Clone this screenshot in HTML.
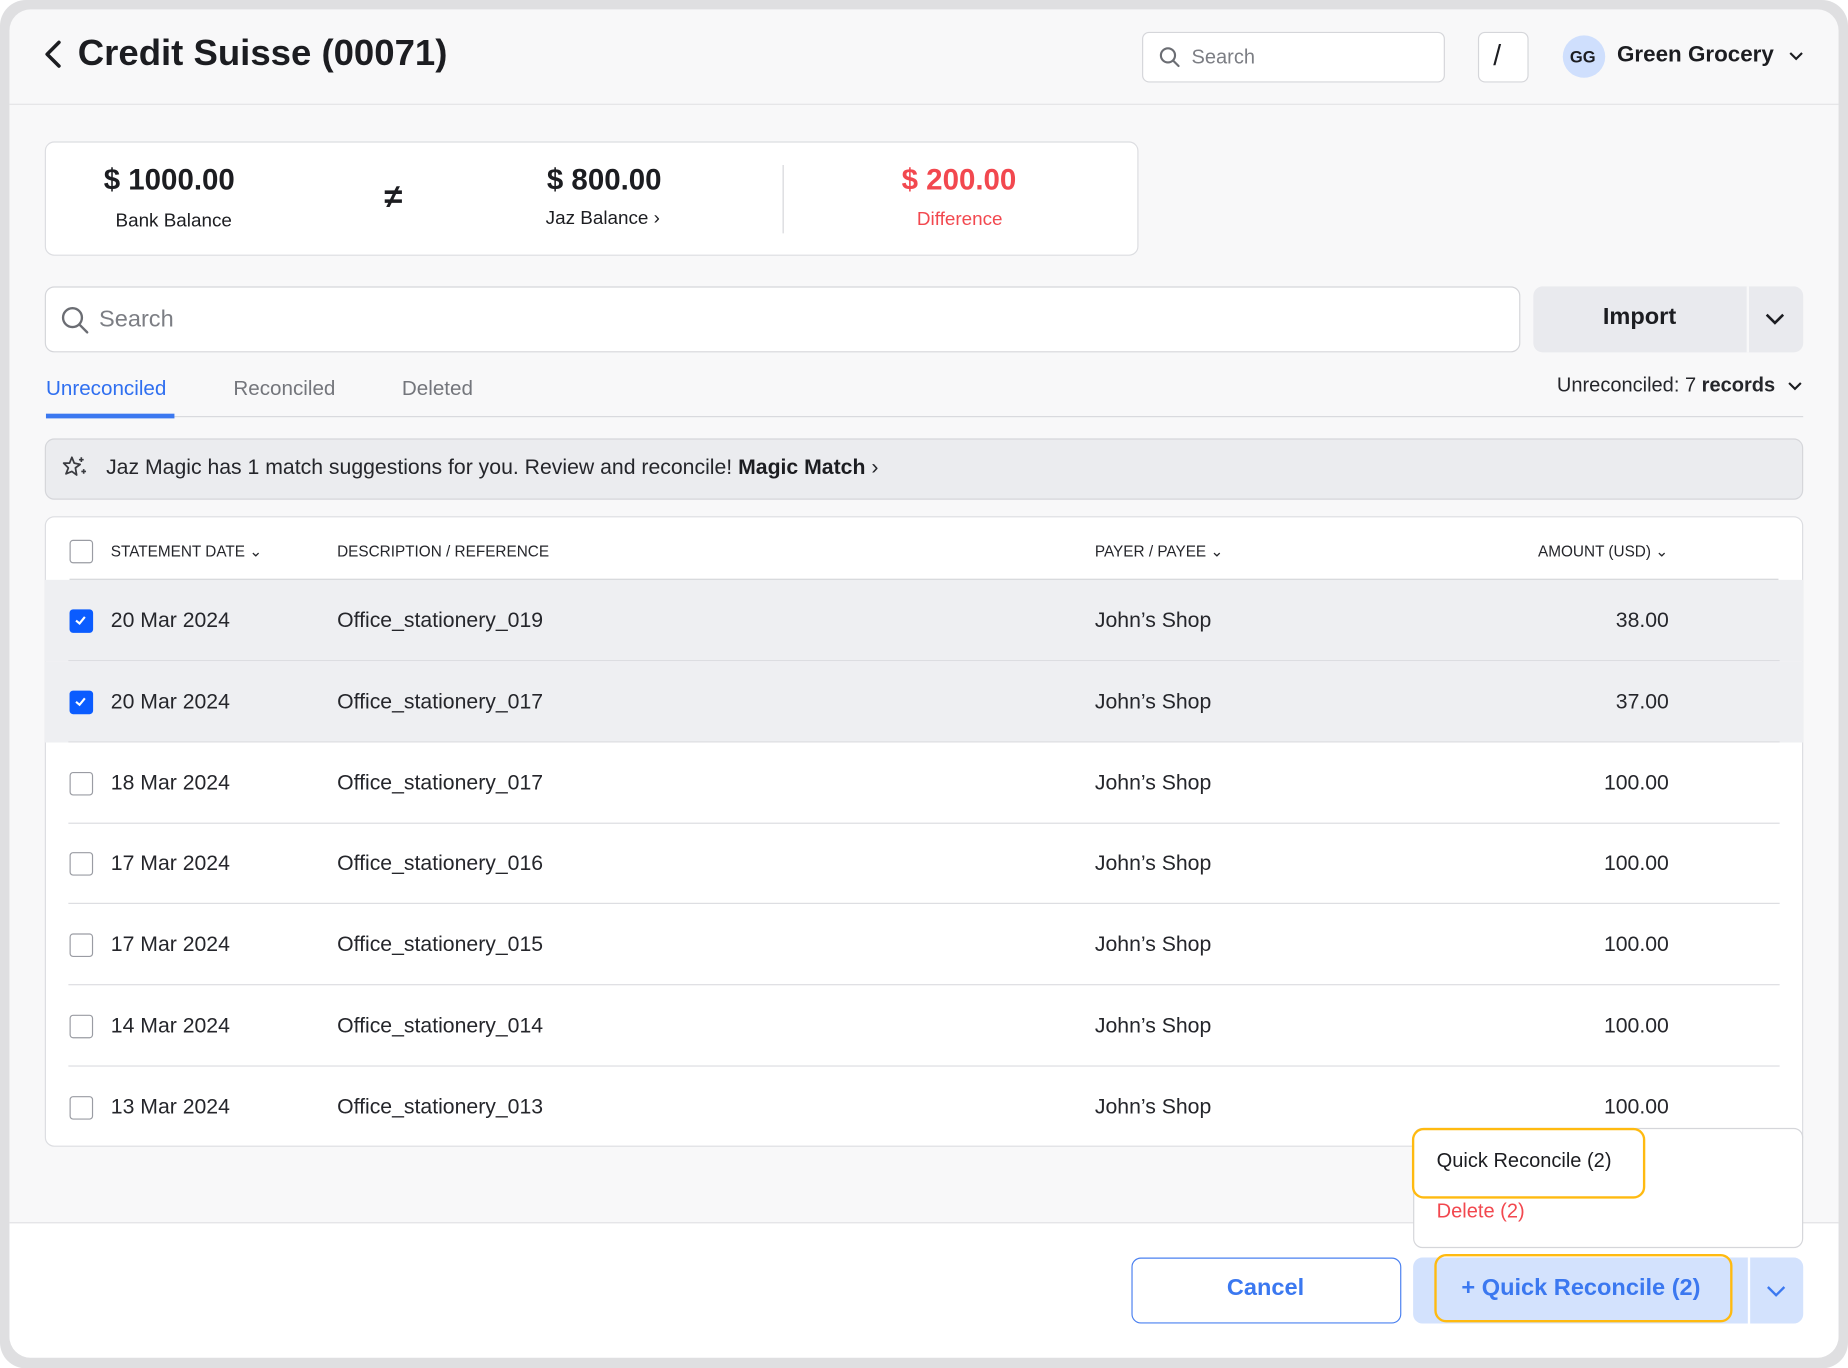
<!DOCTYPE html>
<html><head><meta charset="utf-8"><style>
*{box-sizing:border-box;margin:0;padding:0}
html,body{width:1848px;height:1368px;overflow:hidden;background:#fff;font-family:"Liberation Sans",sans-serif;color:#1c1d21}
#s{position:absolute;left:0;top:0;width:1568px;height:1161px;transform:scale(1.178571);transform-origin:0 0;background:#dfdfe1;border-radius:22px}
.a{position:absolute}
#in{left:8px;top:8px;width:1552px;height:1144px;background:#f8f8f9;border-radius:18px;overflow:hidden}
.t{position:absolute;white-space:nowrap}
.row{position:absolute;left:38px;width:1492px;height:69px}
.row .ln{position:absolute;left:20px;right:20px;bottom:0;height:1px;background:#dcdde1}
.cb{position:absolute;left:21px;width:20px;height:20px;border:1.5px solid #9a9ca3;border-radius:3px;background:#fff}
.cb.on{background:#0b5cff;border-color:#0b5cff}
.rt{position:absolute;font-size:18px;color:#25262b;top:24px}
</style></head><body><div id="s">
<div id="in" class="a">
 <div class="a" style="left:0;top:80px;width:1552px;height:1px;background:#e3e3e6"></div>
 <svg class="a" style="left:28px;top:24px" width="20" height="30" viewBox="0 0 20 30"><path d="M14 4 L4 14 L14 24" fill="none" stroke="#1c1d21" stroke-width="3" stroke-linecap="round" stroke-linejoin="round"/></svg>
 <div class="t" style="left:58px;top:19px;font-size:31px;font-weight:bold">Credit Suisse (00071)</div>
 <div class="a" style="left:961px;top:19px;width:257px;height:43px;background:#fff;border:1px solid #d5d6da;border-radius:6px"></div>
 <svg class="a" style="left:975px;top:31px" width="20" height="20" viewBox="0 0 20 20"><circle cx="8" cy="8" r="6" fill="none" stroke="#6b6d73" stroke-width="1.8"/><path d="M12.5 12.5 L17 17" stroke="#6b6d73" stroke-width="1.8" stroke-linecap="round"/></svg>
 <div class="t" style="left:1003px;top:31px;font-size:17px;color:#7c7e84">Search</div>
 <div class="a" style="left:1246px;top:19px;width:43px;height:43px;background:#fff;border:1px solid #d5d6da;border-radius:6px"></div>
 <div class="t" style="left:1259px;top:26px;font-size:24px;color:#1c1d21">/</div>
 <div class="a" style="left:1318px;top:22px;width:36px;height:36px;border-radius:50%;background:#cfdffd"></div>
 <div class="t" style="left:1324px;top:32px;font-size:14px;font-weight:bold;color:#1c1d21">GG</div>
 <div class="t" style="left:1364px;top:28px;font-size:19px;font-weight:bold">Green Grocery</div>
 <svg class="a" style="left:1509px;top:35px" width="14" height="10" viewBox="0 0 14 10"><path d="M2 2 L7 7 L12 2" fill="none" stroke="#1c1d21" stroke-width="1.8"/></svg>

 <div class="a" style="left:30px;top:112px;width:928px;height:97px;background:#fff;border:1.5px solid #dcdde1;border-radius:8px"></div>
 <div class="t" style="left:80px;top:131px;font-size:25px;font-weight:bold">$ 1000.00</div>
 <div class="t" style="left:90px;top:171px;font-size:16px">Bank Balance</div>
 <div class="t" style="left:318px;top:143px;font-size:28px;font-weight:bold">≠</div>
 <div class="t" style="left:456px;top:131px;font-size:25px;font-weight:bold">$ 800.00</div>
 <div class="t" style="left:455px;top:169px;font-size:16px">Jaz Balance ›</div>
 <div class="a" style="left:656px;top:132px;width:1px;height:58px;background:#d5d6da"></div>
 <div class="t" style="left:757px;top:131px;font-size:25px;font-weight:bold;color:#f2484f">$ 200.00</div>
 <div class="t" style="left:770px;top:170px;font-size:16px;color:#f2484f">Difference</div>

 <div class="a" style="left:30px;top:235px;width:1252px;height:56px;background:#fff;border:1.5px solid #d5d6da;border-radius:8px"></div>
 <svg class="a" style="left:43px;top:251px" width="26" height="26" viewBox="0 0 26 26"><circle cx="10.5" cy="10.5" r="8" fill="none" stroke="#6b6d73" stroke-width="2"/><path d="M16.5 16.5 L23 23" stroke="#6b6d73" stroke-width="2" stroke-linecap="round"/></svg>
 <div class="t" style="left:76px;top:252px;font-size:20px;color:#7c7e84">Search</div>
 <div class="a" style="left:1293px;top:235px;width:229px;height:56px;background:#e9eaee;border-radius:8px"></div>
 <div class="a" style="left:1474px;top:235px;width:2px;height:56px;background:#f8f8f9"></div>
 <div class="t" style="left:1352px;top:250px;font-size:20px;font-weight:bold">Import</div>
 <svg class="a" style="left:1489px;top:257px" width="18" height="12" viewBox="0 0 18 12"><path d="M2 2 L9 9 L16 2" fill="none" stroke="#1c1d21" stroke-width="2.2"/></svg>

 <div class="t" style="left:31px;top:311px;font-size:17.5px;color:#2f6ff0">Unreconciled</div>
 <div class="t" style="left:190px;top:311px;font-size:17.5px;color:#74767c">Reconciled</div>
 <div class="t" style="left:333px;top:311px;font-size:17.5px;color:#74767c">Deleted</div>
 <div class="a" style="left:31px;top:345px;width:1491px;height:1px;background:#d8d9dd"></div>
 <div class="a" style="left:31px;top:343px;width:109px;height:4px;background:#3b78f0"></div>
 <div class="t" style="left:1313px;top:309px;font-size:17px;color:#25262b">Unreconciled: 7 <b>records</b></div>
 <svg class="a" style="left:1508px;top:315px" width="14" height="10" viewBox="0 0 14 10"><path d="M2 2 L7 7 L12 2" fill="none" stroke="#1c1d21" stroke-width="1.8"/></svg>

 <div class="a" style="left:30px;top:364px;width:1492px;height:52px;background:#ebecef;border:1.5px solid #d5d6da;border-radius:8px"></div>
 <svg class="a" style="left:44px;top:377px" width="24" height="24" viewBox="0 0 24 24"><path d="M9 3 L11 8 L16 9 L12 12 L13 18 L9 15 L4 17 L6 12 L2 8 L7 8 Z" fill="none" stroke="#3a3b40" stroke-width="1.5" stroke-linejoin="round"/><path d="M17 3 v4 M15 5 h4 M19 13 v4 M17 15 h4" stroke="#3a3b40" stroke-width="1.4"/></svg>
 <div class="t" style="left:82px;top:378px;font-size:18px;color:#25262b">Jaz Magic has 1 match suggestions for you. Review and reconcile! <b style="color:#1c1d21">Magic Match</b> ›</div>

 <div class="a" style="left:30px;top:430px;width:1492px;height:535px;background:#fff;border:1.5px solid #dcdde1;border-radius:8px;overflow:hidden">
  <div class="cb" style="top:19px;left:20px"></div>
  <div class="t" style="left:55px;top:21px;font-size:13px;color:#25262b">STATEMENT DATE ⌄</div>
  <div class="t" style="left:247px;top:21px;font-size:13px;color:#25262b">DESCRIPTION / REFERENCE</div>
  <div class="t" style="left:890px;top:21px;font-size:13px;color:#25262b">PAYER / PAYEE ⌄</div>
  <div class="t" style="left:1266px;top:21px;font-size:13px;color:#25262b">AMOUNT (USD) ⌄</div>
  <div class="a" style="left:20px;right:20px;top:52px;height:1.5px;background:#d5d6da"></div>
 </div>
 <div id="rows"></div>

 <div class="a" style="left:0;top:1029px;width:1552px;height:115px;background:#fff;border-top:1px solid #e0e0e3"></div>
 <div class="a" style="left:952px;top:1059px;width:229px;height:56px;border:1.5px solid #4a80f0;border-radius:8px;background:#fff"></div>
 <div class="t" style="left:1033px;top:1074px;font-size:20px;font-weight:bold;color:#3b78f0">Cancel</div>
 <div class="a" style="left:1191px;top:1059px;width:331px;height:56px;background:#d3e2fd;border-radius:8px"></div>
 <div class="a" style="left:1475px;top:1059px;width:2px;height:56px;background:#fff"></div>
 <div class="a" style="left:1209px;top:1056px;width:253px;height:58px;border:2.5px solid #ffba10;border-radius:10px"></div>
 <div class="t" style="left:1232px;top:1074px;font-size:20px;font-weight:bold;color:#3b78f0">+ Quick Reconcile (2)</div>
 <svg class="a" style="left:1490px;top:1082px" width="18" height="12" viewBox="0 0 18 12"><path d="M2 2 L9 9 L16 2" fill="none" stroke="#3b78f0" stroke-width="2"/></svg>

 <div class="a" style="left:1191px;top:949px;width:331px;height:102px;background:#fff;border:1px solid #d5d6da;border-radius:8px"></div>
 <div class="a" style="left:1190px;top:949px;width:198px;height:60px;border:2.5px solid #ffba10;border-radius:10px;background:#fff"></div>
 <div class="t" style="left:1211px;top:967px;font-size:17px;color:#1c1d21">Quick Reconcile (2)</div>
 <div class="t" style="left:1211px;top:1010px;font-size:17px;color:#f2484f">Delete (2)</div>
</div>
</div>
<script>
var d=[["20 Mar 2024","Office_stationery_019","38.00",1],["20 Mar 2024","Office_stationery_017","37.00",1],["18 Mar 2024","Office_stationery_017","100.00",0],["17 Mar 2024","Office_stationery_016","100.00",0],["17 Mar 2024","Office_stationery_015","100.00",0],["14 Mar 2024","Office_stationery_014","100.00",0],["13 Mar 2024","Office_stationery_013","100.00",0]];
var h="";d.forEach(function(r,i){var top=484+i*68.8;
h+='<div class="row" style="left:30px;top:'+top+'px;'+(r[3]?'background:#eeeff2;':'')+'">'+
(r[3]?'<div class="cb on" style="top:25px"><svg width="17" height="17" viewBox="0 0 17 17" style="position:absolute;left:0;top:0"><path d="M4.5 8.5 L7.5 11 L12 5.5" fill="none" stroke="#fff" stroke-width="1.8"/></svg></div>':'<div class="cb" style="top:25px"></div>')+
'<div class="rt" style="left:56px">'+r[0]+'</div><div class="rt" style="left:248px">'+r[1]+'</div><div class="rt" style="left:891px">John’s Shop</div><div class="rt" style="right:114px">'+r[2]+'</div>'+(i<6?'<div class="ln"></div>':'')+'</div>';});
document.getElementById("rows").outerHTML=h;
</script>
</body></html>
